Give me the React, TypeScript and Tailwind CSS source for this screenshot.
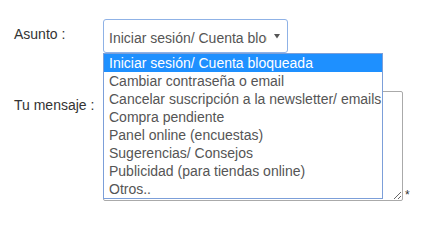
import { useState } from 'react';

const opciones = [
  'Iniciar sesión/ Cuenta bloqueada',
  'Cambiar contraseña o email',
  'Cancelar suscripción a la newsletter/ emails',
  'Compra pendiente',
  'Panel online (encuestas)',
  'Sugerencias/ Consejos',
  'Publicidad (para tiendas online)',
  'Otros..',
];

export default function App() {
  const [asunto, setAsunto] = useState(0);
  const [open, setOpen] = useState(true);
  const [mensaje, setMensaje] = useState('');

  return (
    <div className="relative w-[435px] h-[225px] bg-white text-[14px] text-[#333] font-['Liberation_Sans',Arial,sans-serif]">
      <div className="flex pt-[19px] pl-[14px]">
        <label className="w-[89px] mt-[7px] leading-[16px]">Asunto :</label>
        <div
          onClick={() => setOpen(!open)}
          className="flex w-[185px] h-[34px] border border-[#8fb2e6] rounded-[3px] text-[#555] cursor-default"
        >
          <div className="w-[163px] pl-[5px] pt-[10px] leading-[16px] whitespace-nowrap overflow-hidden">
            {opciones[asunto]}
          </div>
          <div className="pl-[7px] pt-[14px]">
            <svg width="6" height="5" viewBox="0 0 6 5">
              <path d="M0 0 L6 0 L3 4.5 Z" fill="#555" />
            </svg>
          </div>
        </div>
      </div>

      <div className="flex mt-[38px] pl-[14px]">
        <label className="w-[89px] mt-[6px] leading-[16px]">Tu mensaje :</label>
        <textarea
          value={mensaje}
          onChange={(e) => setMensaje(e.target.value)}
          className="block w-[300px] h-[110px] border border-[#aaa] rounded-[2px] outline-none p-1"
        />
        <span className="self-end ml-[2px] mb-[-2px] leading-[16px] text-[12px] text-[#333]">*</span>
      </div>

      {open && (
        <ul className="absolute left-[103px] top-[53px] w-[280px] border border-[#7c9fd9] bg-white text-[#555]">
          {opciones.map((o, i) => (
            <li
              key={o}
              onClick={() => {
                setAsunto(i);
                setOpen(false);
              }}
              className={`h-[18px] pl-[5px] leading-[18px] whitespace-nowrap ${
                i === asunto ? 'bg-[#1e90ff] text-white' : ''
              }`}
            >
              {o}
            </li>
          ))}
        </ul>
      )}
    </div>
  );
}
